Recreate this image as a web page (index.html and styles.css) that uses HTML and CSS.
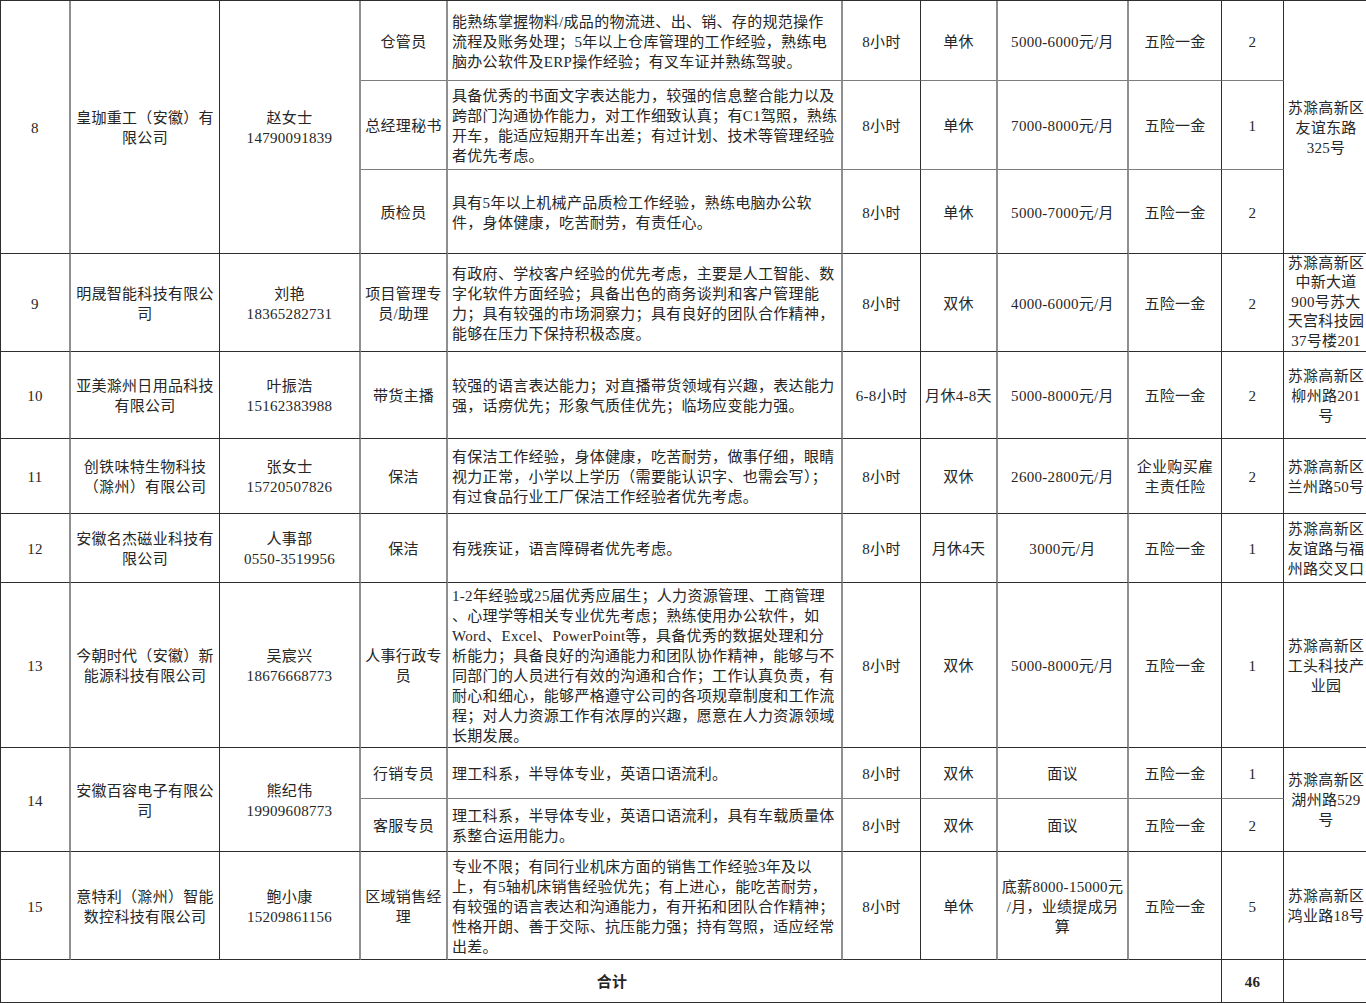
FILE: index.html
```html
<!DOCTYPE html>
<html lang="zh-CN">
<head>
<meta charset="utf-8">
<title>招聘信息</title>
<link rel="stylesheet" href="styles.css">
</head>
<body>
<table class="jobs">
  <colgroup>
    <col class="w-no"><col class="w-co"><col class="w-ct"><col class="w-pos"><col class="w-req"><col class="w-hr"><col class="w-rest"><col class="w-sal"><col class="w-ben"><col class="w-num"><col class="w-addr">
  </colgroup>
  <tbody>
    <tr class="r8a">
      <td class="c-no" rowspan="3">8</td>
      <td class="c-co" rowspan="3">皇珈重工（安徽）有<br>限公司</td>
      <td class="c-ct" rowspan="3">赵女士<br>14790091839</td>
      <td class="c-pos sub">仓管员</td>
      <td class="c-req sub">能熟练掌握物料/成品的物流进、出、销、存的规范操作<br>流程及账务处理；5年以上仓库管理的工作经验，熟练电<br>脑办公软件及ERP操作经验；有叉车证并熟练驾驶。</td>
      <td class="c-hr sub">8小时</td>
      <td class="c-rest sub">单休</td>
      <td class="c-sal sub">5000-6000元/月</td>
      <td class="c-ben sub">五险一金</td>
      <td class="c-num sub">2</td>
      <td class="c-addr" rowspan="3">苏滁高新区<br>友谊东路<br>325号</td>
    </tr>
    <tr class="r8b">
      <td class="c-pos sub">总经理秘书</td>
      <td class="c-req sub">具备优秀的书面文字表达能力，较强的信息整合能力以及<br>跨部门沟通协作能力，对工作细致认真；有C1驾照，熟练<br>开车，能适应短期开车出差；有过计划、技术等管理经验<br>者优先考虑。</td>
      <td class="c-hr sub">8小时</td>
      <td class="c-rest sub">单休</td>
      <td class="c-sal sub">7000-8000元/月</td>
      <td class="c-ben sub">五险一金</td>
      <td class="c-num sub">1</td>
    </tr>
    <tr class="r8c">
      <td class="c-pos">质检员</td>
      <td class="c-req">具有5年以上机械产品质检工作经验，熟练电脑办公软<br>件，身体健康，吃苦耐劳，有责任心。</td>
      <td class="c-hr">8小时</td>
      <td class="c-rest">单休</td>
      <td class="c-sal">5000-7000元/月</td>
      <td class="c-ben">五险一金</td>
      <td class="c-num">2</td>
    </tr>
    <tr class="r9">
      <td class="c-no">9</td>
      <td class="c-co">明晟智能科技有限公<br>司</td>
      <td class="c-ct">刘艳<br>18365282731</td>
      <td class="c-pos">项目管理专<br>员/助理</td>
      <td class="c-req">有政府、学校客户经验的优先考虑，主要是人工智能、数<br>字化软件方面经验；具备出色的商务谈判和客户管理能<br>力；具有较强的市场洞察力；具有良好的团队合作精神，<br>能够在压力下保持积极态度。</td>
      <td class="c-hr">8小时</td>
      <td class="c-rest">双休</td>
      <td class="c-sal">4000-6000元/月</td>
      <td class="c-ben">五险一金</td>
      <td class="c-num">2</td>
      <td class="c-addr tight">苏滁高新区<br>中新大道<br>900号苏大<br>天宫科技园<br>37号楼201</td>
    </tr>
    <tr class="r10">
      <td class="c-no">10</td>
      <td class="c-co">亚美滁州日用品科技<br>有限公司</td>
      <td class="c-ct">叶振浩<br>15162383988</td>
      <td class="c-pos">带货主播</td>
      <td class="c-req">较强的语言表达能力；对直播带货领域有兴趣，表达能力<br>强，话痨优先；形象气质佳优先；临场应变能力强。</td>
      <td class="c-hr">6-8小时</td>
      <td class="c-rest">月休4-8天</td>
      <td class="c-sal">5000-8000元/月</td>
      <td class="c-ben">五险一金</td>
      <td class="c-num">2</td>
      <td class="c-addr">苏滁高新区<br>柳州路201<br>号</td>
    </tr>
    <tr class="r11">
      <td class="c-no">11</td>
      <td class="c-co">创铁味特生物科技<br>（滁州）有限公司</td>
      <td class="c-ct">张女士<br>15720507826</td>
      <td class="c-pos">保洁</td>
      <td class="c-req">有保洁工作经验，身体健康，吃苦耐劳，做事仔细，眼睛<br>视力正常，小学以上学历（需要能认识字、也需会写）；<br>有过食品行业工厂保洁工作经验者优先考虑。</td>
      <td class="c-hr">8小时</td>
      <td class="c-rest">双休</td>
      <td class="c-sal">2600-2800元/月</td>
      <td class="c-ben">企业购买雇<br>主责任险</td>
      <td class="c-num">2</td>
      <td class="c-addr">苏滁高新区<br>兰州路50号</td>
    </tr>
    <tr class="r12">
      <td class="c-no">12</td>
      <td class="c-co">安徽名杰磁业科技有<br>限公司</td>
      <td class="c-ct">人事部<br>0550-3519956</td>
      <td class="c-pos">保洁</td>
      <td class="c-req">有残疾证，语言障碍者优先考虑。</td>
      <td class="c-hr">8小时</td>
      <td class="c-rest">月休4天</td>
      <td class="c-sal">3000元/月</td>
      <td class="c-ben">五险一金</td>
      <td class="c-num">1</td>
      <td class="c-addr">苏滁高新区<br>友谊路与福<br>州路交叉口</td>
    </tr>
    <tr class="r13">
      <td class="c-no">13</td>
      <td class="c-co">今朝时代（安徽）新<br>能源科技有限公司</td>
      <td class="c-ct">吴宸兴<br>18676668773</td>
      <td class="c-pos">人事行政专<br>员</td>
      <td class="c-req">1-2年经验或25届优秀应届生；人力资源管理、工商管理<br>、心理学等相关专业优先考虑；熟练使用办公软件，如<br>Word、Excel、PowerPoint等，具备优秀的数据处理和分<br>析能力；具备良好的沟通能力和团队协作精神，能够与不<br>同部门的人员进行有效的沟通和合作；工作认真负责，有<br>耐心和细心，能够严格遵守公司的各项规章制度和工作流<br>程；对人力资源工作有浓厚的兴趣，愿意在人力资源领域<br>长期发展。</td>
      <td class="c-hr">8小时</td>
      <td class="c-rest">双休</td>
      <td class="c-sal">5000-8000元/月</td>
      <td class="c-ben">五险一金</td>
      <td class="c-num">1</td>
      <td class="c-addr">苏滁高新区<br>工头科技产<br>业园</td>
    </tr>
    <tr class="r14a">
      <td class="c-no" rowspan="2">14</td>
      <td class="c-co" rowspan="2">安徽百容电子有限公<br>司</td>
      <td class="c-ct" rowspan="2">熊纪伟<br>19909608773</td>
      <td class="c-pos sub">行销专员</td>
      <td class="c-req sub">理工科系，半导体专业，英语口语流利。</td>
      <td class="c-hr sub">8小时</td>
      <td class="c-rest sub">双休</td>
      <td class="c-sal sub">面议</td>
      <td class="c-ben sub">五险一金</td>
      <td class="c-num sub">1</td>
      <td class="c-addr" rowspan="2">苏滁高新区<br>湖州路529<br>号</td>
    </tr>
    <tr class="r14b">
      <td class="c-pos">客服专员</td>
      <td class="c-req">理工科系，半导体专业，英语口语流利，具有车载质量体<br>系整合运用能力。</td>
      <td class="c-hr">8小时</td>
      <td class="c-rest">双休</td>
      <td class="c-sal">面议</td>
      <td class="c-ben">五险一金</td>
      <td class="c-num">2</td>
    </tr>
    <tr class="r15">
      <td class="c-no">15</td>
      <td class="c-co">意特利（滁州）智能<br>数控科技有限公司</td>
      <td class="c-ct">鲍小康<br>15209861156</td>
      <td class="c-pos">区域销售经<br>理</td>
      <td class="c-req">专业不限；有同行业机床方面的销售工作经验3年及以<br>上，有5轴机床销售经验优先；有上进心，能吃苦耐劳，<br>有较强的语言表达和沟通能力，有开拓和团队合作精神；<br>性格开朗、善于交际、抗压能力强；持有驾照，适应经常<br>出差。</td>
      <td class="c-hr">8小时</td>
      <td class="c-rest">单休</td>
      <td class="c-sal">底薪8000-15000元<br>/月，业绩提成另<br>算</td>
      <td class="c-ben">五险一金</td>
      <td class="c-num">5</td>
      <td class="c-addr">苏滁高新区<br>鸿业路18号</td>
    </tr>
    <tr class="rtotal">
      <td class="c-total" colspan="9">合计</td>
      <td class="c-num strong">46</td>
      <td class="c-addr"></td>
    </tr>
  </tbody>
</table>
</body>
</html>
```

FILE: styles.css
```css
html, body {
  margin: 0;
  padding: 0;
  overflow: hidden;
  background: #ffffff;
}

body {
  font-family: "Liberation Serif", "Noto Sans CJK SC", serif;
  color: #262626;
}

.jobs {
  border-collapse: separate;
  border-spacing: 0;
  table-layout: fixed;
  width: 1368px;
  border-top: 1px solid #2e2e2e;
  border-left: 1px solid #2e2e2e;
}

.w-no { width: 70px; }
.w-co { width: 149px; }
.w-ct { width: 141px; }
.w-pos { width: 87px; }
.w-req { width: 395px; }
.w-hr { width: 78px; }
.w-rest { width: 77px; }
.w-sal { width: 131px; }
.w-ben { width: 93px; }
.w-num { width: 62px; }
.w-addr { width: 85px; }

.jobs td {
  padding: 2px 2px 0;
  border-right: 1px solid #2e2e2e;
  border-bottom: 1px solid #2e2e2e;
  font-size: 15px;
  letter-spacing: 0.3px;
  line-height: 20px;
  text-align: center;
  vertical-align: middle;
  white-space: nowrap;
  overflow: hidden;
}

.jobs td.c-no,
.jobs td.c-ct,
.jobs td.c-pos,
.jobs td.c-req,
.jobs td.c-rest,
.jobs td.c-sal {
  border-right: 2px solid #8f8f8f;
}

.jobs td.sub {
  border-bottom: 1px solid #7d7d7d;
}

.jobs td.c-req {
  text-align: left;
  padding-left: 4px;
}

.jobs td.c-addr {
  padding: 1px 0 0;
}

.jobs td.tight {
  padding: 0;
  line-height: 19.4px;
}

.jobs td.c-total {
  font-weight: bold;
  padding-right: 0;
}

.jobs td.strong {
  font-weight: bold;
}

.r8a { height: 80px; }
.r8b { height: 89px; }
.r8c { height: 84px; }
.r9 { height: 98px; }
.r10 { height: 87px; }
.r11 { height: 75px; }
.r12 { height: 69px; }
.r13 { height: 165px; }
.r14a { height: 51px; }
.r14b { height: 53px; }
.r15 { height: 108px; }
.rtotal { height: 43px; }
```
